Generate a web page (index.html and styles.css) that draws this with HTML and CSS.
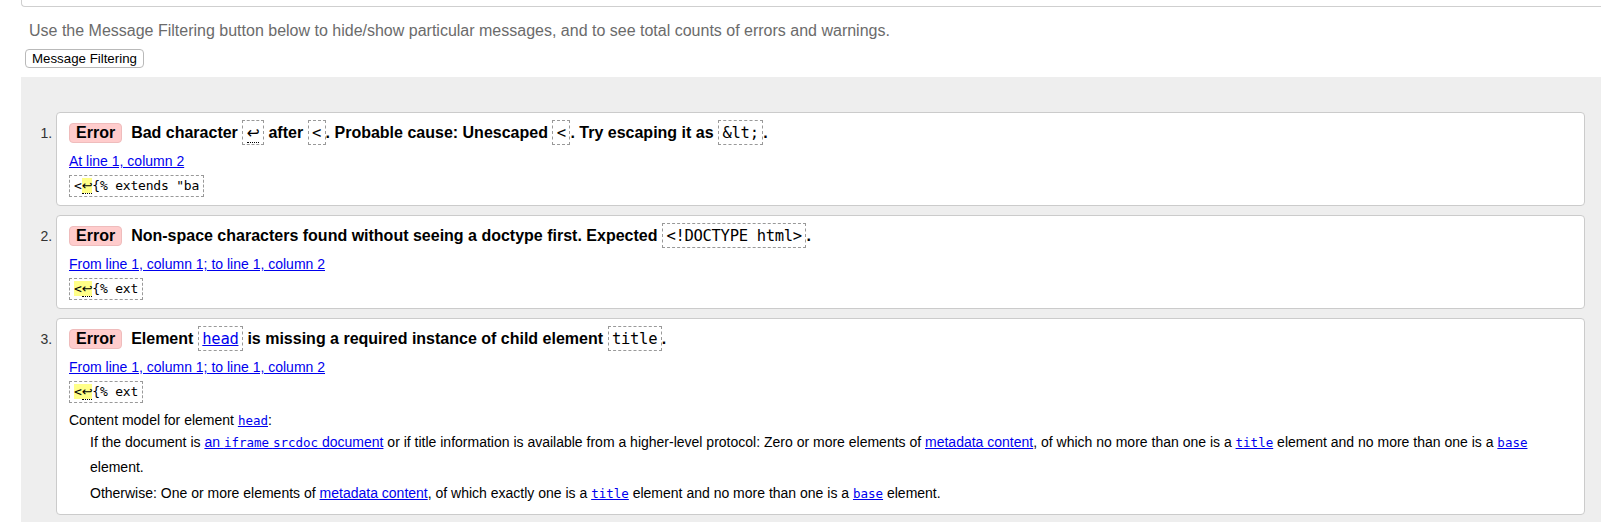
FILE: index.html
```html
<!DOCTYPE html>
<html lang="en">
<head>
<meta charset="utf-8">
<title>Nu Html Checker results</title>
<link rel="stylesheet" href="styles.css">
</head>
<body>
<div class="topbox"></div>
<p class="intro">Use the Message Filtering button below to hide/show particular messages, and to see total counts of errors and warnings.</p>
<div class="filter-row"><button class="filter" type="button">Message Filtering</button></div>
<section class="results">
  <ol class="msgs">
    <li class="msg">
      <p class="title"><strong class="badge">Error</strong><span>Bad character <code class="tcode"><span class="lf">↩</span></code> after <code class="tcode">&lt;</code>. Probable cause: Unescaped <code class="tcode">&lt;</code>. Try escaping it as <code class="tcode">&amp;lt;</code>.</span></p>
      <p class="loc"><a href="#">At line 1, column 2</a></p>
      <p class="extract"><code class="ecode">&lt;<mark><span class="lf">↩</span></mark>{% extends "ba</code></p>
    </li>
    <li class="msg">
      <p class="title"><strong class="badge">Error</strong><span>Non-space characters found without seeing a doctype first. Expected <code class="tcode">&lt;!DOCTYPE html&gt;</code>.</span></p>
      <p class="loc"><a href="#">From line 1, column 1; to line 1, column 2</a></p>
      <p class="extract"><code class="ecode"><mark>&lt;<span class="lf">↩</span></mark>{% ext</code></p>
    </li>
    <li class="msg">
      <p class="title"><strong class="badge">Error</strong><span>Element <code class="tcode"><a href="#">head</a></code> is missing a required instance of child element <code class="tcode">title</code>.</span></p>
      <p class="loc"><a href="#">From line 1, column 1; to line 1, column 2</a></p>
      <p class="extract"><code class="ecode"><mark>&lt;<span class="lf">↩</span></mark>{% ext</code></p>
      <dl class="model">
        <dt>Content model for element <a href="#"><code class="lcode">head</code></a>:</dt>
        <dd>If the document is <a href="#">an <code class="lcode">iframe</code> <code class="lcode">srcdoc</code> document</a> or if title information is available from a higher-level protocol: Zero or more elements of <a href="#">metadata content</a>, of which no more than one is a <a href="#"><code class="lcode">title</code></a> element and no more than one is a <a href="#"><code class="lcode">base</code></a> element.</dd>
        <dd>Otherwise: One or more elements of <a href="#">metadata content</a>, of which exactly one is a <a href="#"><code class="lcode">title</code></a> element and no more than one is a <a href="#"><code class="lcode">base</code></a> element.</dd>
      </dl>
    </li>
  </ol>
</section>
</body>
</html>
```

FILE: styles.css
```css
html {
  overflow: hidden;
}

body {
  margin: 0;
  font-family: "Liberation Sans", Arial, sans-serif;
  color: #000;
  background: #fff;
}

.topbox {
  margin-left: 21px;
  height: 6px;
  border: 1px solid #cfcfcf;
  border-top: 0;
  border-right: 0;
  border-bottom-left-radius: 4px;
}

.intro {
  margin: 15px 0 0 29px;
  font-size: 16px;
  line-height: 18px;
  color: #6b6b6b;
}

.filter-row {
  margin: 9px 0 0 25px;
  height: 19px;
}

.filter {
  display: block;
  font: 13.3px/15px "Liberation Sans", Arial, sans-serif;
  padding: 1px 6px;
  border: 1px solid #b9b9b9;
  border-radius: 4px;
  background: #fff;
  color: #000;
}

.results {
  margin: 9px 0 0 21px;
  padding: 35px 16px 40px 35px;
  background: #eee;
}

.msgs {
  margin: 0;
  padding: 0;
  list-style: decimal outside;
}

.msg {
  font-size: 14px;
  background: #fff;
  border: 1px solid #cbcbcb;
  border-radius: 4px;
  padding: 8px 12px 8px 12px;
  margin-bottom: 9px;
}

.msg::marker {
  color: #333;
}

.title {
  margin: 0;
  font-size: 16px;
  font-weight: bold;
  line-height: 24px;
}

.badge {
  display: inline-block;
  line-height: 16px;
  padding: 1px 6px;
  border: 1px solid #efbcbc;
  border-radius: 4px;
  background: #fcc;
  margin-right: 9px;
}

.tcode {
  font: normal 15.5px/17px "DejaVu Sans Mono", monospace;
  letter-spacing: -0.3px;
  border: 1px dashed #999;
  padding: 3px 3.5px 2px;
}

.lf {
  font-family: "DejaVu Sans", sans-serif;
  border-bottom: 1px dotted #000;
}

a {
  color: #00e;
  text-decoration: underline;
}

.loc {
  margin: 6px 0 0;
  line-height: 20px;
}

.extract {
  margin: 4px 0 0;
  height: 22px;
  line-height: 22px;
}

.ecode {
  display: inline-block;
  vertical-align: top;
  font: 13px/14px "DejaVu Sans Mono", monospace;
  letter-spacing: -0.2px;
  padding: 3px 4px;
  border: 1px dashed #999;
}

mark {
  background: #ff8;
  color: inherit;
}

.lcode {
  font: 12.5px "DejaVu Sans Mono", monospace;
}

.model {
  margin: 7px 0 0;
}

.model dt {
  line-height: 20px;
}

.model dd {
  margin: 0 0 0 21px;
  line-height: 25px;
}

.model dd + dd {
  margin-top: 1px;
}
```
